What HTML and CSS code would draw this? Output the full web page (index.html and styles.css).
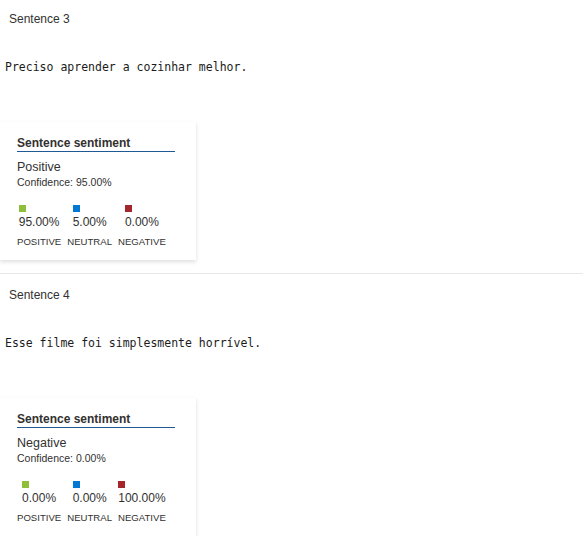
FILE: index.html
```html
<!DOCTYPE html>
<html>
<head>
<meta charset="utf-8">
<link rel="stylesheet" href="styles.css">
</head>
<body>
<div class="section">
  <div class="sent-title">Sentence 3</div>
  <div class="sent-text">Preciso aprender a cozinhar melhor.</div>
  <div class="card">
    <div class="card-title">Sentence sentiment</div>
    <div class="label-main">Positive</div>
    <div class="conf">Confidence: 95.00%</div>
    <div class="scores">
      <div class="col">
        <div class="inner"><span class="sq green"></span><div class="val">95.00%</div></div>
        <div class="lab">POSITIVE</div>
      </div>
      <div class="col">
        <div class="inner"><span class="sq blue"></span><div class="val">5.00%</div></div>
        <div class="lab">NEUTRAL</div>
      </div>
      <div class="col">
        <div class="inner"><span class="sq red"></span><div class="val">0.00%</div></div>
        <div class="lab">NEGATIVE</div>
      </div>
    </div>
  </div>
</div>
<div class="section">
  <div class="sent-title">Sentence 4</div>
  <div class="sent-text">Esse filme foi simplesmente horrível.</div>
  <div class="card">
    <div class="card-title">Sentence sentiment</div>
    <div class="label-main">Negative</div>
    <div class="conf">Confidence: 0.00%</div>
    <div class="scores">
      <div class="col">
        <div class="inner"><span class="sq green"></span><div class="val">0.00%</div></div>
        <div class="lab">POSITIVE</div>
      </div>
      <div class="col">
        <div class="inner"><span class="sq blue"></span><div class="val">0.00%</div></div>
        <div class="lab">NEUTRAL</div>
      </div>
      <div class="col">
        <div class="inner"><span class="sq red"></span><div class="val">100.00%</div></div>
        <div class="lab">NEGATIVE</div>
      </div>
    </div>
  </div>
</div>
</body>
</html>
```
FILE: styles.css
```css
html, body {
  margin: 0;
  padding: 0;
  background: #ffffff;
}
body {
  font-family: "Segoe UI", "Liberation Sans", Arial, sans-serif;
  color: #323130;
}
.section {
  padding-top: 13px;
  padding-bottom: 13px;
  border-bottom: 1px solid #e8e8e8;
}
.section:first-child {
  padding-top: 11px;
}
.sent-title {
  font-size: 12px;
  line-height: 16px;
  padding-left: 9px;
}
.sent-text {
  font-family: "DejaVu Sans Mono", "Liberation Mono", monospace;
  font-size: 11.5px;
  line-height: 16px;
  color: #1b1b1b;
  padding-left: 5px;
  margin-top: 32px;
}
.card {
  margin-top: 47px;
  width: 196px;
  height: 138px;
  box-sizing: border-box;
  padding: 13px 0 0 17px;
  background: #fff;
  box-shadow: 0 1.6px 4px rgba(0, 0, 0, 0.13), 0 0.3px 1px rgba(0, 0, 0, 0.1);
}
.card-title {
  width: 158px;
  font-size: 12px;
  font-weight: bold;
  line-height: 16px;
  border-bottom: 1px solid #1f5a96;
  color: #323130;
}
.label-main {
  margin-top: 7px;
  font-size: 12.5px;
  line-height: 16px;
}
.conf {
  font-size: 10.5px;
  line-height: 14px;
}
.scores {
  display: flex;
  gap: 6px;
  margin-top: 16px;
}
.col {
  display: flex;
  flex-direction: column;
  align-items: center;
}
.inner {
  display: flex;
  flex-direction: column;
  align-items: flex-start;
}
.sq {
  width: 7px;
  height: 7px;
  display: block;
}
.green { background: #8fbf3a; }
.blue { background: #0078d4; }
.red { background: #a4262c; }
.val {
  margin-top: 2px;
  font-size: 12px;
  line-height: 16px;
}
.lab {
  margin-top: 5px;
  font-size: 9.6px;
  line-height: 14px;
}
```
